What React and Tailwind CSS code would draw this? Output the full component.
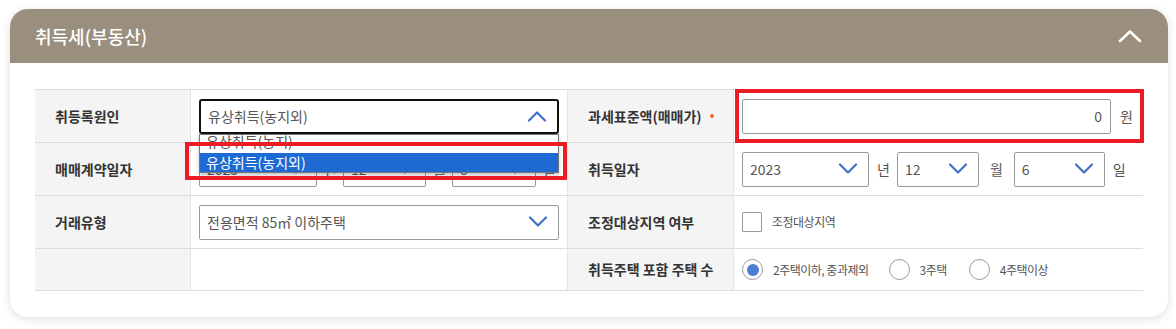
import React from "react";

const font = { fontFamily: '"Noto Sans CJK KR", "Noto Sans", sans-serif' };

function ChevronDown({ up = false }) {
  return (
    <svg width="20" height="12" viewBox="0 0 20 12" className="shrink-0">
      <path
        d={up ? "M2 10.5 L10 2.5 L18 10.5" : "M2 1.5 L10 9.5 L18 1.5"}
        fill="none"
        stroke="#3f72c6"
        strokeWidth="2.2"
        strokeLinecap="round"
        strokeLinejoin="round"
      />
    </svg>
  );
}

function Select({ value, className = "", focused = false }) {
  return (
    <div
      className={`flex h-[35px] shrink-0 items-center justify-between bg-white pl-[7px] pr-[10px] text-[14px] text-[#555] ${
        focused ? "rounded-[3px] border-2 border-[#111]" : "rounded-[2px] border border-[#9a9a9a]"
      } ${className}`}
    >
      <span className="truncate">{value}</span>
      <ChevronDown up={focused} />
    </div>
  );
}

function Label({ children, dot, className = "h-[53px]" }) {
  return (
    <div className={`flex items-center border-b border-[#dcdcdc] bg-[#f4f4f4] pl-[20px] text-[14px] font-semibold text-[#333] ${className}`}>
      {children}
      {dot && <span className="ml-[8px] h-[4px] w-[4px] rounded-full bg-[#f26a1b]" />}
    </div>
  );
}

function Cell({ children, className = "h-[53px]" }) {
  return (
    <div className={`flex items-center border-b border-l border-[#dcdcdc] border-l-[#e4e4e4] px-[8px] ${className}`}>
      {children}
    </div>
  );
}

function Unit({ children, className = "mx-[8px]" }) {
  return <span className={`shrink-0 text-[14px] text-[#555] ${className}`}>{children}</span>;
}

function Radio({ checked, label, className = "" }) {
  return (
    <label className={`flex items-center ${className}`}>
      <span className="flex h-[21px] w-[21px] items-center justify-center rounded-full border border-[#9a9a9a] bg-white">
        {checked && <span className="h-[12px] w-[12px] rounded-full bg-[#4a7fd6]" />}
      </span>
      <span className="ml-[10px] text-[12px] tracking-[-0.5px] text-[#555]">{label}</span>
    </label>
  );
}

export default function App() {
  return (
    <div className="relative h-[329px] w-[1176px] bg-white pl-[10px] pt-[9px]" style={font}>
      <div className="w-[1158px] rounded-[18px] bg-white shadow-[0_2px_10px_rgba(0,0,0,0.13)]">
        {/* header */}
        <div className="flex h-[54px] items-center justify-between rounded-t-[18px] bg-[#9a8f7f] pl-[25px] pr-[26px]">
          <h2 className="text-[18px] font-medium text-white">취득세(부동산)</h2>
          <svg width="24" height="14" viewBox="0 0 24 14">
            <path d="M2 12 L12 2.5 L22 12" fill="none" stroke="#fff" strokeWidth="2.6" strokeLinecap="round" strokeLinejoin="round" />
          </svg>
        </div>

        {/* body */}
        <div className="px-[25px] pb-[26px] pt-[26px]">
          <div className="grid grid-cols-[155px_377px_166px_410px] border-t border-[#dcdcdc]">
            {/* row 1 */}
            <Label>취등록원인</Label>
            <Cell>
              <div className="relative w-full">
                <Select value="유상취득(농지외)" focused className="w-full" />
                <div className="absolute left-0 top-full z-10 w-full overflow-hidden border border-[#777] bg-white text-[14px] shadow-[0_2px_4px_rgba(0,0,0,0.25)]">
                  <div className="h-[18px] overflow-hidden pl-[6px] leading-[14px] text-[#555]">
                    <div className="-mt-[1px]">유상취득(농지)</div>
                  </div>
                  <div className="h-[19px] bg-[#1d6ad4] pl-[6px] leading-[19px] text-white">유상취득(농지외)</div>
                </div>
              </div>
            </Cell>
            <Label dot className="h-[53px] border-l border-l-[#e4e4e4]">과세표준액(매매가)</Label>
            <Cell>
              <div className="flex h-[35px] w-[369px] shrink-0 items-center justify-end rounded-[2px] border border-[#9a9a9a] bg-white pr-[8px] text-[14px] text-[#555]">
                0
              </div>
              <Unit className="ml-[9px]">원</Unit>
            </Cell>

            {/* row 2 */}
            <Label>매매계약일자</Label>
            <Cell>
              <Select value="2023" className="w-[118px]" />
              <Unit className="ml-[7px] mr-[6px]">년</Unit>
              <Select value="12" className="w-[83px]" />
              <Unit className="ml-[7px] mr-[6px]">월</Unit>
              <Select value="6" className="w-[84px]" />
              <Unit className="ml-[7px]">일</Unit>
            </Cell>
            <Label className="h-[53px] border-l border-l-[#e4e4e4]">취득일자</Label>
            <Cell>
              <Select value="2023" className="w-[127px]" />
              <Unit className="ml-[8px] mr-[7px]">년</Unit>
              <Select value="12" className="w-[82px]" />
              <Unit className="ml-[11px] mr-[11px]">월</Unit>
              <Select value="6" className="w-[91px]" />
              <Unit className="ml-[8px]">일</Unit>
            </Cell>

            {/* row 3 */}
            <Label>거래유형</Label>
            <Cell>
              <Select value="전용면적 85㎡ 이하주택" className="w-full" />
            </Cell>
            <Label className="h-[53px] border-l border-l-[#e4e4e4]">조정대상지역 여부</Label>
            <Cell>
              <span className="h-[20px] w-[20px] rounded-[1px] border border-[#9a9a9a] bg-white" />
              <span className="ml-[10px] text-[12px] tracking-[-0.5px] text-[#555]">조정대상지역</span>
            </Cell>

            {/* row 4 */}
            <Label className="h-[42px]"> </Label>
            <Cell className="h-[42px]" />
            <Label className="h-[42px] border-l border-l-[#e4e4e4]">취득주택 포함 주택 수</Label>
            <Cell className="h-[42px]">
              <Radio checked label="2주택이하, 중과제외" className="mr-[20px]" />
              <Radio label="3주택" className="mr-[22px]" />
              <Radio label="4주택이상" />
            </Cell>
          </div>
        </div>
      </div>

      {/* annotation rectangles */}
      <div className="pointer-events-none absolute left-[185px] top-[142px] z-20 h-[38px] w-[382px] border-4 border-[#ec1c24]" />
      <div className="pointer-events-none absolute left-[735px] top-[89px] z-20 h-[54px] w-[409px] border-4 border-[#ec1c24]" />
    </div>
  );
}
